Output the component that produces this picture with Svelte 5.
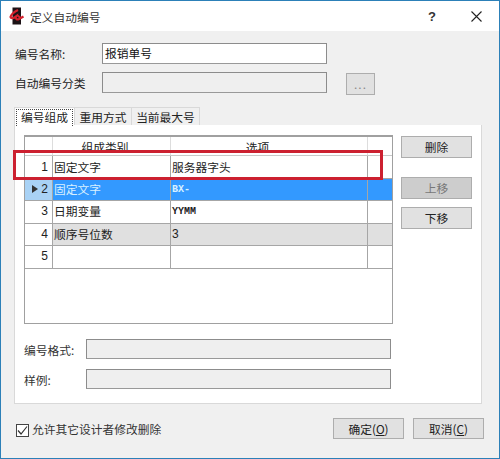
<script>
  const rows = [
    { no: 1, kind: '固定文字', option: '服务器字头' },
    { no: 2, kind: '固定文字', option: 'BX-', mono: true, active: true },
    { no: 3, kind: '日期变量', option: 'YYMM', mono: true },
    { no: 4, kind: '顺序号位数', option: '3', shaded: true },
    { no: 5, kind: '', option: '' }
  ];
</script>

<div class="window">
  <div class="titlebar">
    <svg class="logo" width="16" height="18" viewBox="0 0 16 18">
      <rect x="3.5" y="0.5" width="8.5" height="17" fill="#1c1216" />
      <path d="M9 3 C5 5 2 8 1.5 10 C2 12 5 11 7 9.5 C6 12 8 13 10 12 L14.5 9.5 M8 8 L11 10.5" fill="none" stroke="#d5202c" stroke-width="2.2" />
    </svg>
    <span class="title">定义自动编号</span>
    <span class="help">?</span>
    <svg class="close" width="11" height="11" viewBox="0 0 11 11">
      <path d="M0.5 0.5 L10.5 10.5 M10.5 0.5 L0.5 10.5" stroke="#222" stroke-width="1.1" fill="none" />
    </svg>
  </div>

  <div class="body">
    <div class="field">
      <span class="label">编号名称:</span>
      <div class="input white">报销单号</div>
    </div>
    <div class="field second">
      <span class="label">自动编号分类</span>
      <div class="input"></div>
      <button class="btn dots" disabled>...</button>
    </div>

    <div class="tabs">
      <div class="tab current"><span class="focus">编号组成</span></div>
      <div class="tab t2">重用方式</div>
      <div class="tab t3">当前最大号</div>
    </div>

    <div class="panel">
      <div class="top">
        <div class="grid">
          <div class="row head">
            <div class="no"></div>
            <div class="c1">组成类别</div>
            <div class="c2">选项</div>
            <div class="c3"></div>
          </div>
          {#each rows as r}
            <div class="row" class:active={r.active} class:shaded={r.shaded}>
              <div class="no">
                {#if r.active}<span class="arrow"></span>{/if}
                {r.no}
              </div>
              <div class="c1">{r.kind}</div>
              <div class="c2" class:mono={r.mono}>{r.option}</div>
              <div class="c3"></div>
            </div>
          {/each}
        </div>
        <div class="side">
          <button class="btn">删除</button>
          <button class="btn off">上移</button>
          <button class="btn">下移</button>
        </div>
      </div>

      <div class="info">
        <span class="label">编号格式:</span>
        <div class="input"></div>
      </div>
      <div class="info">
        <span class="label">样例:</span>
        <div class="input"></div>
      </div>
    </div>

    <div class="footer">
      <span class="check">
        <svg width="11" height="11" viewBox="0 0 11 11">
          <path d="M1 5.5 L4 9 L10 1.5" fill="none" stroke="#333" stroke-width="1.2" />
        </svg>
      </span>
      <span class="allow">允许其它设计者修改删除</span>
      <button class="btn ok">确定(<u>O</u>)</button>
      <button class="btn ok">取消(<u>C</u>)</button>
    </div>
  </div>

  <!-- annotation drawn over the screenshot -->
  <div class="mark"></div>
</div>

<style>
  :global(body) {
    margin: 0;
  }

  .window {
    position: relative;
    box-sizing: border-box;
    width: 500px;
    height: 459px;
    border: 1px solid #2c80b8;
    background: #f0f0f0;
    font-family: "Noto Sans CJK SC", "Liberation Sans", sans-serif;
    font-size: 11.75px;
    color: #222;
    overflow: hidden;
  }

  .titlebar {
    display: flex;
    align-items: center;
    height: 30px;
    background: #fff;
  }
  .logo {
    margin-left: 8px;
  }
  .title {
    margin-left: 5px;
    color: #333;
    flex: 1;
  }
  .help {
    font-family: "Liberation Sans", sans-serif;
    font-weight: bold;
    font-size: 13px;
    margin-right: 35px;
    color: #333;
  }
  .close {
    margin-right: 17px;
  }

  .body {
    padding: 12px 0 0 13px;
  }

  .field {
    display: flex;
    align-items: center;
    height: 21px;
  }
  .field.second {
    margin-top: 8px;
  }
  .field .label {
    width: 88px;
    padding-left: 1px;
    margin-right: -1px;
    white-space: nowrap;
  }
  .field .input {
    width: 225px;
  }

  .input {
    box-sizing: border-box;
    height: 21px;
    border: 1px solid #8c8c8c;
    border-bottom-color: #999;
    background: #efefef;
    padding-left: 2px;
    line-height: 18px;
    color: #111;
  }
  .input.white {
    background: #fff;
  }

  .btn {
    box-sizing: border-box;
    width: 71px;
    height: 22px;
    padding: 0;
    border: 1px solid #adadad;
    background: #e1e1e1;
    font: inherit;
    color: #222;
    line-height: 18px;
  }
  .btn.off {
    background: #cdcdcd;
    color: #777;
    margin-top: 19px;
  }
  .btn.off + .btn {
    margin-top: 8px;
  }
  .btn.dots {
    width: 29px;
    margin-left: 19px;
    margin-top: 2px;
    color: #888;
    letter-spacing: 1px;
    line-height: 12px;
  }

  .tabs {
    display: flex;
    margin-top: 14px;
    height: 18px;
  }
  .tab {
    box-sizing: border-box;
    height: 18px;
    border: 1px solid #d9d9d9;
    border-bottom: none;
    border-left: none;
    text-align: center;
    line-height: 17px;
    background: #f0f0f0;
  }
  .tab.current {
    width: 61px;
    background: #fff;
    border-left: 1px solid #d9d9d9;
  }
  .tab.t2 {
    width: 57px;
  }
  .tab.t3 {
    width: 68px;
  }
  .focus {
    display: block;
    margin: 1px 1px 0;
    height: 16px;
    line-height: 14px;
    border: 1px dotted #444;
    border-bottom: none;
  }

  .panel {
    box-sizing: border-box;
    width: 468px;
    height: 279px;
    padding: 10px 0 0 9px;
    background: #fff;
    border: 1px solid #d9d9d9;
    border-top: none;
  }
  .top {
    display: flex;
    align-items: flex-start;
    gap: 8px;
  }

  .grid {
    box-sizing: border-box;
    width: 369px;
    height: 189px;
    border: 1px solid #a0a0a0;
    border-top-width: 2px;
  }
  .row {
    display: grid;
    grid-template-columns: 28px 118px 197px 1fr;
    height: 22.6px;
    box-sizing: border-box;
    border-bottom: 1px solid #a6a6a6;
    line-height: 20px;
  }
  .row:nth-child(2) {
    line-height: 22px;
  }
  .row.head {
    height: 19px;
    line-height: 20px;
    text-align: center;
    border-bottom-color: #c8c8c8;
  }
  .row > div {
    border-right: 1px solid #a6a6a6;
    padding-left: 1px;
    overflow: hidden;
    white-space: nowrap;
  }
  .row > div:last-child {
    border-right: none;
  }
  .row.head > div {
    border-right-color: #ddd;
  }
  .row.head .c1 {
    padding-right: 14px;
  }
  .row.head .c2 {
    padding-right: 24px;
  }
  .no {
    position: relative;
    box-sizing: border-box;
    text-align: right;
    padding-right: 4px;
    font-family: "Liberation Sans", sans-serif;
    font-size: 12px;
  }
  .arrow {
    position: absolute;
    left: 7px;
    top: 6px;
    border-style: solid;
    border-width: 4.5px 0 4.5px 6px;
    border-color: transparent transparent transparent #333;
  }
  .mono {
    font-family: "Liberation Mono", monospace;
    font-size: 10px;
    font-weight: bold;
    line-height: 22px;
  }
  .row.active {
    background: #3399ff;
    color: #d8f0ff;
  }
  .row.active .no {
    background: #a9d2f5;
    color: #222;
  }
  .row.shaded {
    background: #e0e0e0;
  }
  .row.shaded .no {
    background: #fff;
  }
  .row.shaded .c2 {
    font-family: "Liberation Sans", sans-serif;
    font-size: 12px;
  }

  .side {
    display: flex;
    flex-direction: column;
    padding-top: 1px;
  }

  .info {
    display: flex;
    align-items: center;
    height: 20px;
    margin-top: 10px;
  }
  .top + .info {
    margin-top: 15px;
  }
  .info .label {
    width: 62px;
    color: #333;
    white-space: nowrap;
  }
  .info .input {
    width: 305px;
    height: 20px;
  }

  .footer {
    display: flex;
    align-items: center;
    margin-top: 13px;
    height: 22px;
  }
  .check {
    box-sizing: border-box;
    display: flex;
    align-items: center;
    justify-content: center;
    width: 13px;
    height: 13px;
    margin-left: 2px;
    margin-top: 4px;
    border: 1px solid #444;
    background: #fff;
  }
  .allow {
    margin-left: 3px;
    margin-top: 1px;
    flex: 0 0 301px;
    color: #333;
    white-space: nowrap;
  }
  .btn.ok {
    height: 21px;
    margin-right: 9px;
    line-height: 17px;
  }

  .mark {
    position: absolute;
    left: 12px;
    top: 149px;
    width: 370px;
    height: 30px;
    box-sizing: border-box;
    border: 3px solid #cc2030;
    pointer-events: none;
  }
</style>
